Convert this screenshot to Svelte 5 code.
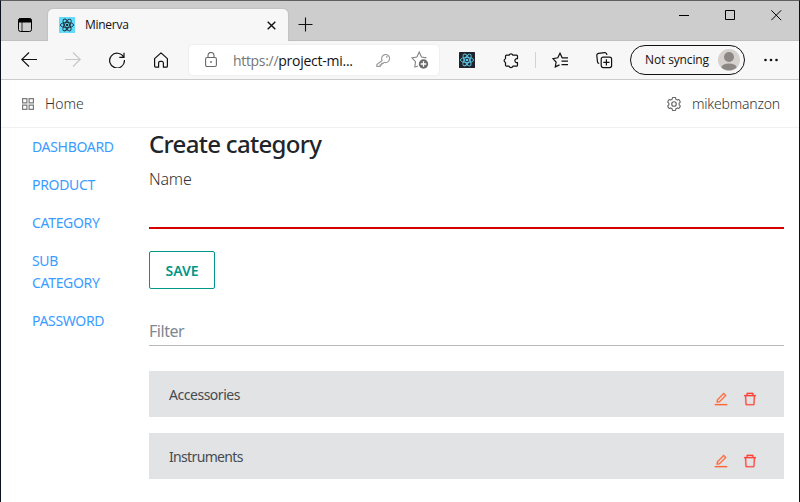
<script>
  const links = ['DASHBOARD', 'PRODUCT', 'CATEGORY', 'SUB CATEGORY', 'PASSWORD'];
  const categories = [
    { name: 'Accessories', cls: 'acc' },
    { name: 'Instruments', cls: 'ins' }
  ];
</script>

{#snippet atom(bg, fg)}
  <svg width="16" height="16" viewBox="0 0 16 16" fill="none" stroke={fg} stroke-width=".9">
    <rect width="16" height="16" rx=".6" fill={bg} stroke="none" />
    <ellipse cx="8" cy="8" rx="6.6" ry="2.6" />
    <ellipse cx="8" cy="8" rx="6.6" ry="2.6" transform="rotate(60 8 8)" />
    <ellipse cx="8" cy="8" rx="6.6" ry="2.6" transform="rotate(120 8 8)" />
    <circle cx="8" cy="8" r="1.3" fill={fg} stroke="none" />
  </svg>
{/snippet}

<div class="window">
  <div class="tabs">
    <svg class="panes" width="14" height="14" viewBox="0 0 14 14" fill="none" stroke="#000">
      <rect x=".5" y=".5" width="13" height="13" rx="2" />
      <path d="M1 1h12v3H1z" fill="#000" />
      <path d="M4 4v9.5" stroke-width=".8" />
    </svg>
    <div class="tab">
      {@render atom('#61dafb', '#20303a')}
      <span class="title">Minerva</span>
      <svg class="x" width="9" height="9" viewBox="0 0 9 9" stroke="#111" stroke-width="1.4"><path d="M.7.7l7.6 7.6M8.3.7L.7 8.3" /></svg>
    </div>
    <svg class="plus" width="15" height="15" viewBox="0 0 15 15" stroke="#111" stroke-width="1.1"><path d="M7.5.5v14M.5 7.5h14" /></svg>
    <div class="controls">
      <svg width="11" height="11" stroke="#000"><path d="M0 5.5h10" /></svg>
      <svg width="11" height="11" fill="none" stroke="#000"><path d="M.5.5h9v9h-9z" /></svg>
      <svg width="11" height="11" stroke="#000"><path d="M.3.3l9.9 9.9M10.2.3L.3 10.2" /></svg>
    </div>
  </div>

  <div class="toolbar">
    <svg class="back" width="16" height="16" viewBox="0 0 16 16" fill="none" stroke="#111" stroke-width="1.1"><path d="M16 7.5H.8M8 .5l-7.2 7 7.2 7" /></svg>
    <svg class="fwd" width="16" height="16" viewBox="0 0 16 16" fill="none" stroke="#c6c6c6" stroke-width="1.1"><path d="M0 7.5h15.2M8 .5l7.2 7-7.2 7" /></svg>
    <svg class="reload" width="16" height="16" viewBox="0 0 16 16" fill="none" stroke="#111" stroke-width="1.2"><path d="M14.6 5.2A7.4 7.4 0 1 0 15.4 8M15 .7v4.6h-4.7" /></svg>
    <svg class="house" width="16" height="16" viewBox="0 0 16 16" fill="none" stroke="#111" stroke-width="1.2"><path d="M1.6 6.6L8 .9l6.4 5.7v7.6a1 1 0 0 1-1 1H10.4V11a1.6 1.6 0 0 0-1.6-1.6H7.2A1.6 1.6 0 0 0 5.6 11v4.2h-3a1 1 0 0 1-1-1z" stroke-linejoin="round" /></svg>
    <div class="address">
      <svg class="lock" width="12" height="16" viewBox="0 0 12 16" fill="none" stroke="#686868" stroke-width="1.1"><rect x=".6" y="5.5" width="10.8" height="9" rx="1.5" /><path d="M3 5.5V3.4a3 3 0 0 1 6 0v2.1" /><circle cx="6" cy="10" r=".9" fill="#686868" stroke="none" /></svg>
      <span class="url"><span class="scheme">https://</span><span class="host">project-mi...</span></span>
      <svg class="key" width="15" height="15" viewBox="0 0 15 15" fill="none" stroke="#999" stroke-width="1.1"><path d="M6.1 7.5A4 4 0 1 1 8.2 9.3L7 10.4H5.7v1.5H4.2v1.5H.8v-1.9z" /><circle cx="10.8" cy="3.9" r=".8" fill="#999" stroke="none" /></svg>
      <svg class="star" width="18" height="18" viewBox="0 0 18 18" fill="none" stroke="#858585" stroke-width="1.1"><path d="M7 15l-3.2 1L4.5 10.6.9 6.9l5-.8L8.2 1l2.3 5.1 5 .8" /><circle cx="12.5" cy="13" r="4.7" fill="#6b6b6b" stroke="none" /><path d="M12.5 10.2v5.6M9.7 13h5.6" stroke="#fff" stroke-width="1.3" /></svg>
    </div>
    {@render atom('#20232a', '#5dc8e8')}
    <svg class="puzzle" width="16" height="17" viewBox="0 0 16 17" fill="none" stroke="#111" stroke-width="1.2" stroke-linejoin="round"><path d="M3.5 3.2h2.6a2 2 0 0 1 3.8 0h3.600a1 1 0 0 1 1 1v2.500a2 2 0 1 0 0 3.800v2.700a1 1 0 0 1-1 1H9.900a2 2 0 0 1-3.800 0H3.500a1 1 0 0 1-1-1v-2.700a2 2 0 0 1 0-3.800V4.200a1 1 0 0 1 1-1z" /></svg>
    <i class="divider"></i>
    <svg class="favs" width="17" height="17" viewBox="0 0 17 17" fill="none" stroke="#111" stroke-width="1.2"><path d="M7.500 12.900l-4.200 2L4.100 10 .9 6.600l4.900-.8L8 1.200l2.200 4.600H16M9.500 9.200H16M9.500 12.600H16" /></svg>
    <svg class="collect" width="17" height="17" viewBox="0 0 17 17" fill="none" stroke="#111" stroke-width="1.2"><path d="M3.200 11.500A2 2 0 0 1 1.500 9.800L.8 3.500a2 2 0 0 1 1.800-2.200l6-.6a2 2 0 0 1 2.200 1.800v.6" /><rect x="5.200" y="5.200" width="10.400" height="10.400" rx="2" /><path d="M10.400 7.300v6.200M7.300 10.400h6.200" /></svg>
    <div class="profile">
      <span>Not syncing</span>
      <svg width="22" height="22" viewBox="0 0 22 22"><circle cx="11" cy="11" r="11" fill="#d5d2cd" /><circle cx="11" cy="8" r="5" fill="#8c8684" /><path d="M3.300 18.200a7.900 4.800 0 0 1 15.400 0A11 11 0 0 1 3.300 18.200z" fill="#8c8684" /></svg>
    </div>
    <svg class="dots" width="14" height="4" viewBox="0 0 14 4" fill="#111"><circle cx="1.500" cy="2" r="1.300" /><circle cx="7" cy="2" r="1.300" /><circle cx="12.500" cy="2" r="1.300" /></svg>
  </div>

  <header>
    <svg width="12" height="12" viewBox="0 0 12 12" fill="none" stroke="#7a7a7a" stroke-width="1.200"><path d="M.6.6h4.300v4.300H.6zM7.100.6h4.300v4.300H7.100zM.6 7.100h4.300v4.300H.6zM7.100 7.100h4.300v4.300H7.100z" /></svg>
    <span class="home">Home</span>
    <svg class="gear" width="14" height="14" viewBox="64 64 896 896" fill="none" stroke="#666" stroke-width="76"><path transform="translate(31 31) scale(.94)" d="M924.8 625.7l-65.500-56c3.100-19 4.700-38.400 4.700-57.800s-1.600-38.800-4.700-57.800l65.500-56a32 32 0 0 0 9.300-35.200l-.9-2.600a443.700 443.700 0 0 0-79.700-137.900l-1.800-2.100a32.100 32.100 0 0 0-35.100-9.500l-81.300 28.900c-30-24.600-63.500-44-99.700-57.600l-15.700-85a32 32 0 0 0-25.800-25.700l-2.700-.5c-52.100-9.400-106.900-9.400-159 0l-2.700.5a32 32 0 0 0-25.800 25.700l-15.800 85.400a351.900 351.900 0 0 0-99 57.400l-81.900-29.100a32 32 0 0 0-35.100 9.500l-1.800 2.100a446 446 0 0 0-79.700 137.900l-.9 2.600c-4.500 12.500-.8 26.500 9.300 35.200l66.300 56.600c-3.100 18.800-4.600 38-4.600 57.100 0 19.200 1.500 38.400 4.600 57.100L99 625.500a32 32 0 0 0-9.300 35.200l.9 2.600c18.100 50.400 44.900 96.900 79.700 137.900l1.800 2.100a32.100 32.100 0 0 0 35.100 9.500l81.900-29.100c29.800 24.500 63.100 43.900 99 57.400l15.800 85.400a32 32 0 0 0 25.800 25.700l2.700.5a449.400 449.400 0 0 0 159 0l2.700-.5a32 32 0 0 0 25.800-25.700l15.700-85a350 350 0 0 0 99.700-57.600l81.300 28.900a32 32 0 0 0 35.100-9.500l1.800-2.100c34.800-41.100 61.600-87.500 79.700-137.900l.9-2.600c4.500-12.300.8-26.300-9.300-35z" /><circle cx="512" cy="512" r="145" /></svg>
    <span class="user">mikebmanzon</span>
  </header>

  <div class="body">
    <nav>
      {#each links as link}<a href="#{link}">{link}</a>{/each}
    </nav>
    <main>
      <h1>Create category</h1>
      <label for="name">Name</label>
      <div id="name" class="field"></div>
      <button>SAVE</button>
      <div class="filter">Filter</div>
      {#each categories as c}
        <div class="row">
          <span class={c.cls}>{c.name}</span>
          <svg width="14" height="14" viewBox="64 64 896 896" fill="#ff6a3d" stroke="#ff6a3d" stroke-width="14"><path d="M257.700 752c2 0 4-.2 6-.5L431.900 722c2-.4 3.900-1.300 5.300-2.800l423.900-423.900a10 10 0 0 0 0-14.100L694.900 114.900c-1.900-1.900-4.400-2.900-7.100-2.900s-5.200 1-7.100 2.900L256.800 538.800c-1.500 1.500-2.400 3.300-2.800 5.300l-29.500 168.200a33.500 33.500 0 0 0 9.400 29.800c6.600 6.400 14.900 9.900 23.800 9.900zm67.400-174.400L687.800 215l73.300 73.300-362.700 362.600-88.900 15.700 15.600-89zM880 836H144c-17.700 0-32 14.300-32 32v36c0 4.400 3.600 8 8 8h784c4.400 0 8-3.600 8-8v-36c0-17.700-14.300-32-32-32z" /></svg>
          <svg width="14" height="14" viewBox="64 64 896 896" fill="#ff4338" stroke="#ff4338" stroke-width="14"><path d="M360 184h304v72h72v-80c0-35.300-28.700-64-64-64H352c-35.300 0-64 28.700-64 64v80h72v-72zm504 72H160c-17.700 0-32 14.300-32 32v32c0 4.400 3.600 8 8 8h60.400l24.700 523c1.600 34.100 29.800 61 63.900 61h454c34.200 0 62.300-26.800 63.900-61l24.700-523H888c4.400 0 8-3.600 8-8v-32c0-17.700-14.300-32-32-32zM731.300 840H292.700l-24.200-512h487l-24.200 512z" /></svg>
        </div>
      {/each}
    </main>
  </div>
</div>

<style>
  .window {
    box-sizing: border-box;
    width: 800px;
    height: 502px;
    overflow: hidden;
    border: 1px solid #08121e;
    border-top-color: #625f61;
    border-bottom: 0;
    background: #fff;
    font: 14px "Noto Sans", "Open Sans", sans-serif;
  }
  svg { display: block; flex: none; }
  span { white-space: nowrap; }
  .tabs { display: flex; height: 40px; background: #cdcdcd; box-shadow: inset 0 -1px #c0c0c0; }
  .panes { margin: 17px 16px 0 17px; }
  .tab {
    box-sizing: border-box;
    display: flex;
    align-items: center;
    width: 240px;
    height: 32px;
    margin-top: 8px;
    padding: 0 12px 0 11px;
    border-radius: 5px 5px 0 0;
    background: #f7f7f7;
    box-shadow: 0 0 2px #aaa;
    clip-path: inset(-3px -3px 0 -3px);
  }
  .title { margin-left: 10px; font: 12px/16px "Open Sans", sans-serif; letter-spacing: -.27px; color: #111; }
  .x { margin-left: auto; }
  .plus { margin: 16px 0 0 10px; }
  .controls { display: flex; gap: 35px; margin: 9px 17px 0 auto; }

  .toolbar { display: flex; align-items: center; height: 38px; padding: 0 20px; border-bottom: 1px solid #cbcbcb; background: #f7f7f7; }
  .fwd, .reload, .house { margin-left: 28px; }
  .address {
    box-sizing: border-box;
    display: flex;
    align-items: center;
    width: 250px;
    height: 30px;
    margin: 0 20px;
    padding: 0 10px 0 16px;
    border-radius: 4px;
    background: #fff;
    box-shadow: 0 0 2px #ddd;
  }
  .url { margin-left: 16px; padding-top: 1px; font: 14px/20px "Open Sans", sans-serif; letter-spacing: -.25px; }
  .scheme { color: #757575; letter-spacing: -.32px; }
  .host { color: #111; }
  .key { margin-left: auto; }
  .star { margin-left: 20px; }
  .puzzle { margin-left: 28px; }
  .divider { width: 1px; height: 16px; margin: 0 16px; background: #d2d2d2; }
  .collect { margin-left: 27px; }
  .profile {
    box-sizing: border-box;
    display: flex;
    align-items: center;
    justify-content: space-between;
    width: 115px;
    height: 30px;
    margin-left: 17px;
    padding: 0 4px 0 14px;
    border: 1px solid #111;
    border-radius: 15px;
    font: 12px/16px "Open Sans", sans-serif;
    letter-spacing: -.13px;
    color: #111;
  }
  .dots { margin-left: 19px; }

  header { display: flex; align-items: center; height: 47px; padding: 0 19px 0 21px; border-bottom: 1px solid #f0f0f0; font-weight: 300; color: #333; }
  .home { margin-left: 11px; }
  .gear { margin-left: auto; }
  .user { margin-left: 11px; letter-spacing: -.2px; }

  .body { display: flex; }
  nav { display: flex; flex-direction: column; gap: 16px; width: 87px; margin: 8px 30px 0 31px; }
  nav a { line-height: 22px; letter-spacing: -.32px; color: #3a9cff; text-decoration: none; }
  main { display: flex; flex-direction: column; align-items: flex-start; width: 635px; }
  h1 { margin: 1px 0 0; font-size: 24px; font-weight: 500; line-height: 30px; letter-spacing: -.68px; color: #212529; }
  label { margin-top: 8px; font-size: 16px; font-weight: 300; line-height: 24px; letter-spacing: -.2px; color: #333; }
  .field { box-sizing: border-box; width: 100%; height: 38px; border-bottom: 2px solid #d40000; }
  button { box-sizing: border-box; width: 66px; height: 38px; margin: 22px 0 0; padding: 2px 0 0; border: 1px solid #009688; border-radius: 2px; background: #fff; font: 600 14px/20px "Noto Sans", sans-serif; letter-spacing: -.1px; color: #009688; }
  .filter { box-sizing: border-box; width: 100%; height: 40px; margin: 17px 0 9px; padding-top: 13px; border-bottom: 1px solid #b9b9b9; font-size: 16px; line-height: 24px; letter-spacing: -.45px; color: #808790; }
  .row { box-sizing: border-box; display: flex; width: 100%; height: 46px; margin: 16px 0 0; padding: 0 27px 0 20px; background: #e2e3e5; color: #464b50; line-height: 47px; }
  .row span { margin-right: auto; }
  .row svg { margin: 21px 0 0 15px; }
  .acc { letter-spacing: -.47px; }
  .ins { letter-spacing: -.66px; }
</style>
